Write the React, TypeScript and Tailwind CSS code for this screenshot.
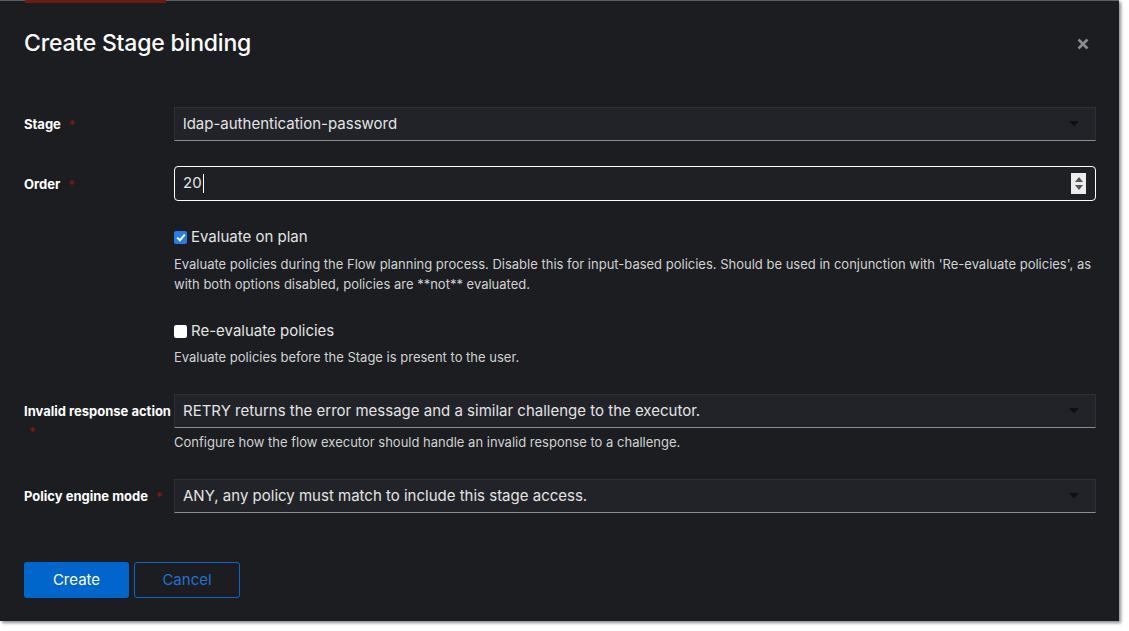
import React from 'react';

const font = { fontFamily: 'Inter, "Noto Sans", sans-serif' };

const Caret = () => (
  <svg width="10" height="6" viewBox="0 0 10 6" className="shrink-0">
    <path d="M0 0 H10 L5 5.5 Z" fill="#0e0f11" />
  </svg>
);

const Req = () => <span className="ml-[8px] text-[12px] text-[#7f1a10] font-bold">*</span>;

const Label: React.FC<{ children: React.ReactNode }> = ({ children }) => (
  <div className="w-[150px] shrink-0 pt-[7px] text-[13px] leading-5 font-bold text-white">{children}</div>
);

const Select: React.FC<{ value: string }> = ({ value }) => (
  <div className="flex-1 h-[34px] flex items-center justify-between pl-2 pr-4 bg-[#212328] border border-[#2e3035] border-b-[#8a8d90] text-[15px] text-[#e4e4e4]">
    <span>{value}</span>
    <Caret />
  </div>
);

const Check: React.FC<{ checked?: boolean; label: string }> = ({ checked, label }) => (
  <div className="flex items-center gap-[4px] h-[22px]">
    {checked ? (
      <span className="w-[13px] h-[13px] rounded-[2px] bg-[#2a7be4] flex items-center justify-center">
        <svg width="10" height="9" viewBox="0 0 10 9">
          <path d="M1.2 4.6 L3.9 7.2 L8.8 1.6" stroke="#fff" strokeWidth="2" fill="none" />
        </svg>
      </span>
    ) : (
      <span className="w-[13px] h-[13px] rounded-[2px] bg-white" />
    )}
    <span className="text-[15px] text-[#e4e4e4]">{label}</span>
  </div>
);

export default function App() {
  return (
    <div className="w-[1129px] h-[631px] bg-white overflow-hidden" style={font}>
      <div className="relative w-[1119px] h-[621px] bg-[#1b1d21] border-t border-[#5e6064] shadow-[2px_2px_3px_rgba(0,0,0,0.45)]">
        <div className="absolute -top-px left-[25px] w-[141px] h-[3px] bg-[#6e1c13]" />

        <div className="flex items-start justify-between pl-6 pr-[30px] pt-[27px]">
          <h1 className="text-[23px] leading-[31px] text-white font-medium tracking-[-0.2px]">Create Stage binding</h1>
          <svg width="12" height="12" viewBox="0 0 12 12" className="mt-[10px]">
            <path d="M1.5 1.5 L10.5 10.5 M10.5 1.5 L1.5 10.5" stroke="#8a8d90" strokeWidth="2.6" />
          </svg>
        </div>

        <div className="flex flex-col pl-6 pr-[23px] mt-[48px]">
          <div className="flex">
            <Label>
              Stage<Req />
            </Label>
            <Select value="ldap-authentication-password" />
          </div>

          <div className="flex mt-[25px]">
            <Label>
              <span className="block pt-px">
                Order<Req />
              </span>
            </Label>
            <div className="flex-1 h-[35px] flex items-center justify-between pl-2 pr-[9px] bg-[#1e2024] border border-white rounded-[4px] text-[15px] text-[#e4e4e4]">
              <span className="flex items-center">
                20<span className="ml-px w-px h-[19px] bg-white" />
              </span>
              <span className="w-[15px] h-[21px] bg-[#ececec] flex flex-col items-center justify-center gap-[3px]">
                <svg width="8" height="5" viewBox="0 0 8 5">
                  <path d="M0 5 L4 0 L8 5 Z" fill="#555" />
                </svg>
                <svg width="8" height="5" viewBox="0 0 8 5">
                  <path d="M0 0 L4 5 L8 0 Z" fill="#555" />
                </svg>
              </span>
            </div>
          </div>

          <div className="flex mt-[25px]">
            <div className="w-[150px] shrink-0" />
            <div className="flex-1">
              <Check checked label="Evaluate on plan" />
              <p className="mt-[6px] text-[13px] leading-5 text-[#d2d2d2]">
                Evaluate policies during the Flow planning process. Disable this for input-based policies. Should be used in conjunction with 'Re-evaluate policies', as with both options disabled, policies are **not** evaluated.
              </p>
              <div className="mt-[26px]">
                <Check label="Re-evaluate policies" />
              </div>
              <p className="mt-[5px] text-[13px] leading-5 text-[#d2d2d2]">
                Evaluate policies before the Stage is present to the user.
              </p>
            </div>
          </div>

          <div className="flex mt-[27px]">
            <Label>
              Invalid response action
              <br />
              <span className="pl-[5px] text-[12px] text-[#7f1a10]">*</span>
            </Label>
            <div className="flex-1">
              <Select value="RETRY returns the error message and a similar challenge to the executor." />
              <p className="mt-[4px] text-[13px] leading-5 text-[#d2d2d2]">
                Configure how the flow executor should handle an invalid response to a challenge.
              </p>
            </div>
          </div>

          <div className="flex mt-[27px]">
            <Label>
              Policy engine mode<Req />
            </Label>
            <Select value="ANY, any policy must match to include this stage access." />
          </div>

          <div className="flex gap-[5px] mt-[49px]">
            <button className="w-[105px] h-[36px] rounded-[3px] bg-[#0066cc] text-[15px] text-white">Create</button>
            <button className="w-[106px] h-[36px] rounded-[3px] border border-[#0d66c8] text-[15px] text-[#1f72d6]">
              Cancel
            </button>
          </div>
        </div>
      </div>
    </div>
  );
}
